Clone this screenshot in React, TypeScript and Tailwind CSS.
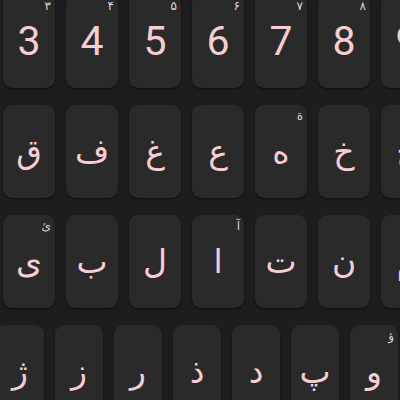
type KeyDef = { label: string; hint?: string };

const row1: KeyDef[] = [
  { label: "3", hint: "۳" },
  { label: "4", hint: "۴" },
  { label: "5", hint: "۵" },
  { label: "6", hint: "۶" },
  { label: "7", hint: "۷" },
  { label: "8", hint: "۸" },
  { label: "9", hint: "۹" },
];

const row2: KeyDef[] = [
  { label: "ق" },
  { label: "ف" },
  { label: "غ" },
  { label: "ع" },
  { label: "ه", hint: "ة" },
  { label: "خ" },
  { label: "ح" },
];

const row3: KeyDef[] = [
  { label: "ی", hint: "ئ" },
  { label: "ب" },
  { label: "ل" },
  { label: "ا", hint: "آ" },
  { label: "ت" },
  { label: "ن" },
  { label: "م" },
];

const row4: KeyDef[] = [
  { label: "ژ" },
  { label: "ز" },
  { label: "ر" },
  { label: "ذ" },
  { label: "د" },
  { label: "پ" },
  { label: "و", hint: "ؤ" },
];

function Key({ k, narrow, digit }: { k: KeyDef; narrow?: boolean; digit?: boolean }) {
  return (
    <div
      className={`relative shrink-0 h-[93px] rounded-[9px] bg-[#2a2a2a] shadow-[0_1px_2px_rgba(0,0,0,0.6)] flex items-center justify-center ${
        narrow ? "w-[48px]" : "w-[52px]"
      }`}
    >
      {k.hint && (
        <span className="absolute top-[5px] right-[4px] text-[12px] leading-none text-[#d9d9d9] font-['DejaVu_Sans',sans-serif]">
          {k.hint}
        </span>
      )}
      <span
        className={
          digit
            ? "text-[41px] leading-none text-[#f6cdd3] font-['Roboto',sans-serif]"
            : "text-[33px] leading-none text-[#f6cdd3] font-['DejaVu_Sans',sans-serif]"
        }
      >
        {k.label}
      </span>
    </div>
  );
}

export default function App() {
  return (
    <div className="w-[400px] h-[400px] overflow-hidden bg-[#1d1d1d]">
      <div className="flex flex-col gap-[17px] -mt-[5px]">
        <div className="flex gap-[11px] pl-[3px]">
          {row1.map((k) => (
            <Key key={k.label} k={k} digit />
          ))}
        </div>
        <div className="flex gap-[11px] pl-[3px]">
          {row2.map((k) => (
            <Key key={k.label} k={k} />
          ))}
        </div>
        <div className="flex gap-[11px] pl-[3px]">
          {row3.map((k) => (
            <Key key={k.label} k={k} />
          ))}
        </div>
        <div className="flex gap-[11px] -ml-[4px]">
          {row4.map((k) => (
            <Key key={k.label} k={k} narrow />
          ))}
        </div>
      </div>
    </div>
  );
}
